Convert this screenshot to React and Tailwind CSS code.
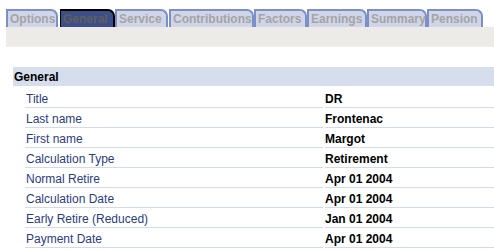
import React from "react";

const tabs = [
  { label: "Options", w: 52, ml: 6 },
  { label: "General", w: 55, ml: 2, active: true },
  { label: "Service", w: 53, ml: 0 },
  { label: "Contributions", w: 85, ml: 1 },
  { label: "Factors", w: 53, ml: 0 },
  { label: "Earnings", w: 60, ml: 0 },
  { label: "Summary", w: 60, ml: 0 },
  { label: "Pension", w: 56, ml: 0 },
];

const rows = [
  ["Title", "DR"],
  ["Last name", "Frontenac"],
  ["First name", "Margot"],
  ["Calculation Type", "Retirement"],
  ["Normal Retire", "Apr 01 2004"],
  ["Calculation Date", "Apr 01 2004"],
  ["Early Retire (Reduced)", "Jan 01 2004"],
  ["Payment Date", "Apr 01 2004"],
];

export default function App() {
  return (
    <div
      className="w-[494px] h-[250px] bg-white overflow-hidden"
      style={{ fontFamily: '"Liberation Sans", Arial, sans-serif' }}
    >
      <div className="flex pt-[9px] h-[27px]">
        {tabs.map((t) => (
          <div
            key={t.label}
            style={{ width: t.w, marginLeft: t.ml }}
            className={
              t.active
                ? "h-[18px] flex items-center pl-[2px] text-[12px] font-bold text-[#5f5f5f] bg-[#3c4f88] border-t-2 border-r-2 border-l border-black rounded-tr-[7px] leading-none"
                : "h-[18px] flex items-center pl-[2px] text-[12px] font-bold text-[#a4a4a4] bg-[#d0d6e8] border-t-2 border-r-2 border-l-2 border-[#7b8fc9] rounded-tr-[7px] leading-none"
            }
          >
            {t.label}
          </div>
        ))}
      </div>
      <div className="ml-[6px] h-[20px] bg-[#ecebe8]" />
      <div className="mt-[20px] ml-[13px] h-[19px] bg-[#d6ddec] flex items-center pl-[1px] pt-[1px] text-[12px] font-bold text-black">
        General
      </div>
      <div className="mt-[2px]">
        {rows.map(([k, v]) => (
          <div key={k} className="flex h-[20px]">
            <div className="ml-[25px] w-[298px] h-[20px] border-b border-[#d3daee] flex items-center pl-[1px] pt-[2px] text-[12px] text-[#2b3b82]">
              {k}
            </div>
            <div className="ml-[2px] flex-1 h-[20px] border-b border-[#d3daee] flex items-center pt-[2px] text-[12px] font-bold text-black">
              {v}
            </div>
          </div>
        ))}
      </div>
    </div>
  );
}
